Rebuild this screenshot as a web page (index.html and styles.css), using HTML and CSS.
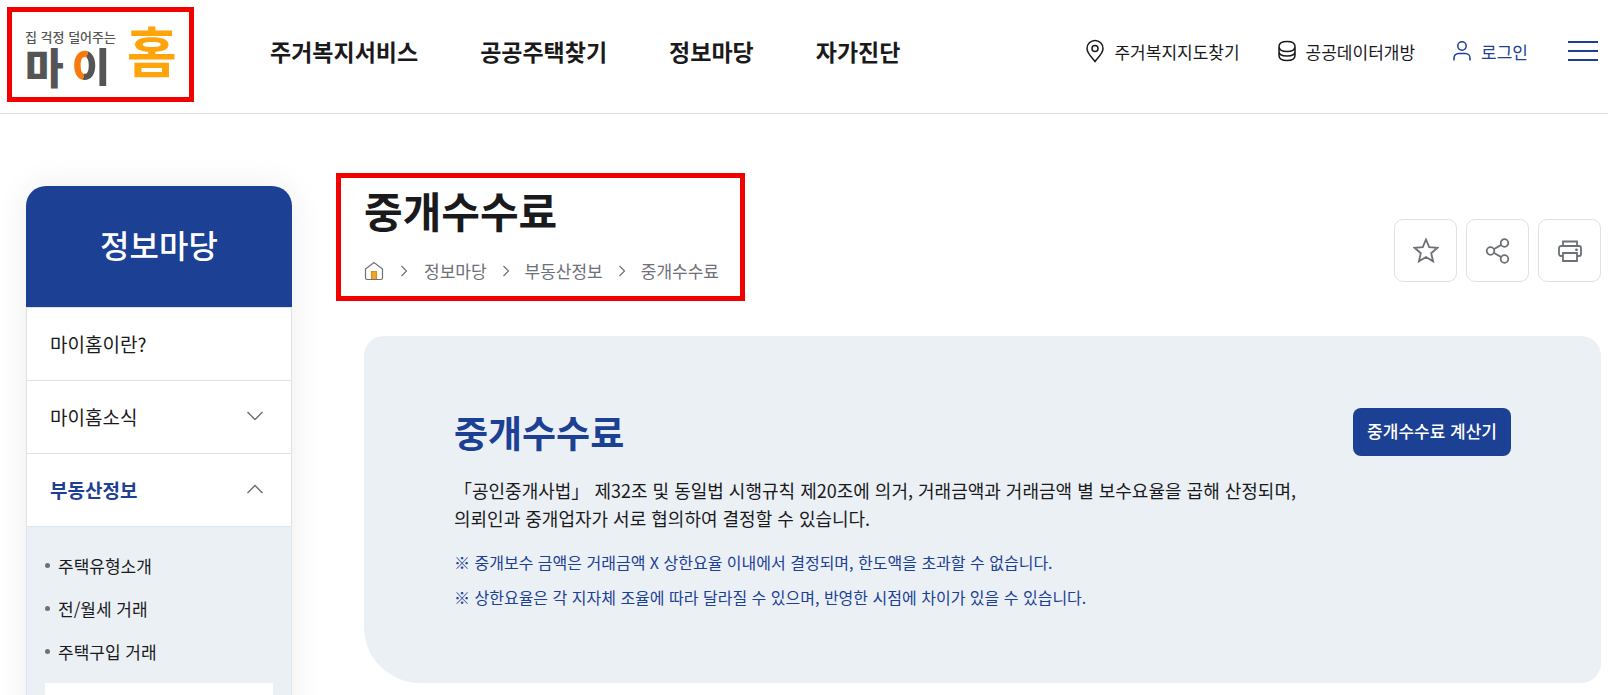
FILE: index.html
```html
<!DOCTYPE html>
<html lang="ko">
<head>
<meta charset="UTF-8">
<meta name="viewport" content="width=device-width, initial-scale=1">
<title>중개수수료</title>
<link rel="stylesheet" href="styles.css">
</head>
<body>
<header class="header">
  <a class="logo" href="#">
    <span class="logo-left">
      <span class="logo-slogan">집 걱정 덜어주는</span>
      <span class="logo-my"><span>마</span><span class="logo-ring">이</span></span>
    </span>
    <span class="logo-home">홈</span>
  </a>
  <nav class="gnb">
    <a href="#">주거복지서비스</a>
    <a href="#">공공주택찾기</a>
    <a href="#">정보마당</a>
    <a href="#">자가진단</a>
  </nav>
  <div class="util">
    <a href="#">
      <svg width="18" height="24" viewBox="0 0 18 24"><path d="M9 22.500C6.500 19 1 14.500 1 9.500a8 8 0 0 1 16 0c0 5-5.500 9.500-8 13z"/><circle cx="9" cy="9.500" r="3"/></svg>
      주거복지지도찾기
    </a>
    <a href="#">
      <svg width="18" height="24" viewBox="0 0 18 24"><path d="M1 7.500C1 4 4 2.500 9 2.500s8 1.500 8 5-3 5-8 5-8-1.500-8-5zM1 7.500v9c0 3.500 3 5 8 5s8-1.500 8-5v-9M1 12.500c0 3 3 4.500 8 4.500s8-1.500 8-4.500"/></svg>
      공공데이터개방
    </a>
    <a class="login" href="#">
      <svg width="18" height="24" viewBox="0 0 18 24"><circle cx="9" cy="7" r="4.200"/><path d="M1 21.500v-2.500a4.500 4.500 0 0 1 4.500-4.500h7a4.500 4.500 0 0 1 4.500 4.500v2.500"/></svg>
      로그인
    </a>
    <button class="menu-btn" type="button" aria-label="전체메뉴"><span></span><span></span><span></span></button>
  </div>
</header>

<div class="container">
  <aside class="lnb">
    <h2>정보마당</h2>
    <ul class="lnb-list">
      <li><a href="#">마이홈이란?</a></li>
      <li><a href="#">마이홈소식 <svg width="18" height="10" viewBox="0 0 18 10"><path d="M1.500 1l7.500 7.500L16.500 1"/></svg></a></li>
      <li class="on"><a href="#">부동산정보 <svg width="18" height="10" viewBox="0 0 18 10"><path d="M1.500 9L9 1.500 16.500 9"/></svg></a></li>
    </ul>
    <div class="lnb-sub">
      <ul>
        <li><a href="#">주택유형소개</a></li>
        <li><a href="#">전/월세 거래</a></li>
        <li><a href="#">주택구입 거래</a></li>
      </ul>
      <div class="lnb-depth"></div>
    </div>
  </aside>

  <main class="content">
    <div class="content-top">
      <div class="title-area">
        <h1>중개수수료</h1>
        <nav class="breadcrumb">
          <a href="#" aria-label="홈"><svg width="20" height="20" viewBox="0 0 20 20"><path class="door" d="M7.500 10.500h5v8h-5z"/><path d="M1.500 8L10 1.500 18.500 8v9a1.500 1.500 0 0 1-1.500 1.500H3A1.500 1.500 0 0 1 1.500 17z"/></svg></a>
          <svg width="10" height="12" viewBox="0 0 10 12"><path d="M2.500 1l5 5-5 5"/></svg>
          <a href="#">정보마당</a>
          <svg width="8" height="12" viewBox="0 0 8 12"><path d="M1.500 1l5 5-5 5"/></svg>
          <a href="#">부동산정보</a>
          <svg width="8" height="12" viewBox="0 0 8 12"><path d="M1.500 1l5 5-5 5"/></svg>
          <a href="#">중개수수료</a>
        </nav>
      </div>
      <div class="tools">
        <button type="button" aria-label="즐겨찾기"><svg width="26" height="26" viewBox="0 0 26 26"><path d="M13 1.500l3.200 7.600 8.300.700-6.300 5.400 1.900 8.100L13 19l-7.100 4.300 1.900-8.100L1.500 9.800l8.300-.700z"/></svg></button>
        <button type="button" aria-label="공유"><svg width="26" height="26" viewBox="0 0 26 26"><circle cx="5.500" cy="13" r="3.800"/><circle cx="19.500" cy="5" r="3.800"/><circle cx="19.500" cy="21" r="3.800"/><path d="M8.800 11.200l7.400-4.300M8.800 14.800l7.400 4.300"/></svg></button>
        <button type="button" aria-label="인쇄"><svg width="26" height="26" viewBox="0 0 26 26"><path d="M6 8V3.500h14V8M6 18H4a2 2 0 0 1-2-2v-6a2 2 0 0 1 2-2h18a2 2 0 0 1 2 2v6a2 2 0 0 1-2 2h-2M6 15h14v8H6z"/><circle class="dot" cx="19.500" cy="11.800" r="1.400"/></svg></button>
      </div>
    </div>

    <section class="info-box">
      <div class="info-head">
        <h2>중개수수료</h2>
        <button class="btn-calc" type="button">중개수수료 계산기</button>
      </div>
      <p class="desc">「공인중개사법」 제32조 및 동일법 시행규칙 제20조에 의거, 거래금액과 거래금액 별 보수요율을 곱해 산정되며,<br>의뢰인과 중개업자가 서로 협의하여 결정할 수 있습니다.</p>
      <p class="note">※ 중개보수 금액은 거래금액 X 상한요율 이내에서 결정되며, 한도액을 초과할 수 없습니다.</p>
      <p class="note">※ 상한요율은 각 지자체 조율에 따라 달라질 수 있으며, 반영한 시점에 차이가 있을 수 있습니다.</p>
    </section>
  </main>
</div>
</body>
</html>
```
FILE: styles.css
```css
* {
  box-sizing: border-box;
  margin: 0;
  padding: 0;
}
body {
  min-height: 100vh;
  background: #fff;
  color: #1a1a1c;
  font-family: "Noto Sans CJK KR", sans-serif;
  font-size: 17px;
}
a {
  color: inherit;
  text-decoration: none;
}
ul {
  list-style: none;
}
button {
  font: inherit;
  cursor: pointer;
}
svg {
  flex: none;
  fill: none;
  stroke: currentColor;
  stroke-width: 1.5;
}

/* header */
.header {
  display: flex;
  align-items: flex-start;
  padding: 7px 8px 11px 7px;
  border-bottom: 1px solid #e1e1e1;
}
.logo {
  display: flex;
  align-items: flex-start;
  gap: 8px;
  width: 187px;
  height: 95px;
  padding: 8px 0 0 13px;
  border: 5px solid #f30000;
  font-weight: 900;
}
.logo-left {
  display: flex;
  flex-direction: column;
  width: 94px;
  padding-top: 8px;
}
.logo-slogan {
  color: #555;
  font-size: 13px;
  font-weight: 500;
  line-height: 18px;
  white-space: nowrap;
}
.logo-my {
  display: flex;
  gap: 8px;
  color: #555;
  font-size: 42px;
  line-height: 40px;
}
.logo-ring {
  background: linear-gradient(100deg, #f97a0c 38%, #555 38%);
  background-clip: text;
  -webkit-background-clip: text;
  color: transparent;
}
.logo-home {
  color: #ffa40a;
  font-size: 54px;
  font-weight: 700;
  line-height: 60px;
}
.gnb {
  display: flex;
  gap: 62px;
  margin-left: 76px;
  font-size: 23px;
  font-weight: 700;
  line-height: 88px;
}
.util {
  display: flex;
  align-items: center;
  gap: 38px;
  height: 88px;
  margin-left: auto;
}
.util a {
  display: flex;
  align-items: center;
  gap: 10px;
}
.util .login {
  color: #1c4094;
}
.menu-btn {
  display: flex;
  flex-direction: column;
  gap: 7px;
  width: 34px;
  padding: 2px;
  background: none;
  border: 0;
}
.menu-btn span {
  width: 100%;
  height: 2px;
  background: #1c4094;
}

/* layout */
.container {
  display: grid;
  grid-template-columns: 266px 1fr;
  gap: 44px;
  height: calc(100vh - 114px);
  padding: 59px 7px 0 26px;
  overflow: hidden;
}

/* left menu */
.lnb {
  margin-top: 13px;
  border-radius: 20px 20px 0 0;
  box-shadow: 0 0 32px rgba(0, 0, 0, 0.08);
}
.lnb h2 {
  padding-bottom: 4px;
  border-radius: 20px 20px 0 0;
  background: #1c4094;
  color: #fff;
  font-size: 32px;
  font-weight: 500;
  line-height: 117px;
  text-align: center;
}
.lnb-list {
  border: 1px solid #e1e1e1;
  border-bottom: 0;
}
.lnb-list a {
  display: flex;
  align-items: center;
  justify-content: space-between;
  height: 73px;
  padding: 0 27px 2px 23px;
  border-bottom: 1px solid #e1e1e1;
  font-size: 19px;
}
.lnb-list svg {
  color: #6d7078;
}
.lnb-list .on a {
  border-color: #dbe7f5;
  color: #1c4094;
  font-weight: 700;
}
.lnb-sub {
  padding: 17px 18px 0;
  background: #ebf0f5;
  border: 1px solid #dbe7f5;
  border-width: 0 1px;
}
.lnb-sub li {
  display: flex;
  align-items: center;
  gap: 8px;
  line-height: 43px;
}
.lnb-sub li::before {
  content: "";
  width: 5px;
  height: 5px;
  border-radius: 50%;
  background: #6d7078;
}
.lnb-depth {
  height: 60px;
  margin-top: 10px;
  background: #fff;
}

/* content */
.content-top {
  display: flex;
  align-items: flex-end;
  justify-content: space-between;
}
.title-area {
  padding: 7px 21px 12px 23px;
  border: 5px solid #f30000;
}
.title-area h1 {
  font-size: 42px;
  line-height: 50px;
}
.breadcrumb {
  display: flex;
  align-items: center;
  gap: 15px;
  margin-top: 23px;
  color: #6d7078;
  line-height: 26px;
}
.breadcrumb svg {
  display: block;
  stroke-width: 1.2;
}
.breadcrumb .door {
  fill: #f5a61d;
  stroke: #d09030;
}
.tools {
  display: flex;
  gap: 9px;
  margin-bottom: 19px;
}
.tools button {
  display: flex;
  align-items: center;
  justify-content: center;
  width: 63px;
  height: 63px;
  background: #fff;
  border: 1px solid #e1e1e1;
  border-radius: 9px;
  color: #6d7078;
}
.tools svg {
  stroke-width: 1.8;
}
.tools .dot {
  fill: currentColor;
  stroke: none;
}
.info-box {
  margin: 35px 0 0 28px;
  padding: 72px 90px 68px;
  border-radius: 20px 20px 20px 56px;
  background: #ebf0f5;
}
.info-head {
  display: flex;
  align-items: center;
  justify-content: space-between;
  height: 48px;
}
.info-head h2 {
  color: #1c4094;
  font-size: 37px;
  line-height: 48px;
}
.btn-calc {
  height: 48px;
  padding: 0 14px 3px;
  background: #1c4094;
  border: 0;
  border-radius: 8px;
  color: #fff;
  font-weight: 500;
}
.desc {
  margin: 20px 0 13px;
  font-size: 18px;
  line-height: 28px;
}
.note {
  color: #1c4094;
  font-size: 16px;
  line-height: 35px;
}
```
